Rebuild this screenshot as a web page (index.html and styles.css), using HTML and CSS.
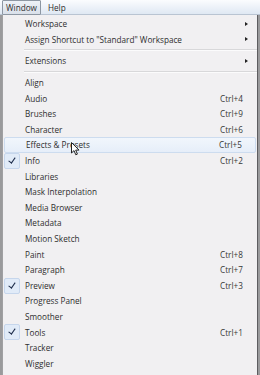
FILE: index.html
```html
<!DOCTYPE html>
<html lang="en">
<head>
    <meta charset="UTF-8">
    <title>Window Menu</title>
    <link rel="stylesheet" href="styles.css">
</head>
<body>
    <div class="menubar">
        <span class="bar-item active">Window</span>
        <span class="bar-item">Help</span>
    </div>
    <div class="menu">
        <div class="item"><span class="label">Workspace</span><span class="arrow"></span></div>
        <div class="item"><span class="label">Assign Shortcut to "Standard" Workspace</span><span class="arrow"></span></div>
        <div class="sep"></div>
        <div class="item"><span class="label">Extensions</span><span class="arrow"></span></div>
        <div class="sep"></div>
        <div class="item"><span class="label">Align</span></div>
        <div class="item"><span class="label">Audio</span><span class="key">Ctrl+4</span></div>
        <div class="item"><span class="label">Brushes</span><span class="key">Ctrl+9</span></div>
        <div class="item"><span class="label">Character</span><span class="key">Ctrl+6</span></div>
        <div class="item hover">
            <span class="label">Effects &amp; Presets</span><span class="key">Ctrl+5</span>
            <svg class="pointer" width="9" height="14" viewBox="0 0 9 14">
                <path d="M0.5 0.5 L0.5 11 L3 8.6 L4.8 12.8 L6.4 12.1 L4.7 8.1 L8 8.1 Z" fill="#fff" stroke="#222" stroke-width="1"/>
            </svg>
        </div>
        <div class="item checked"><span class="check"></span><span class="label">Info</span><span class="key">Ctrl+2</span></div>
        <div class="item"><span class="label">Libraries</span></div>
        <div class="item"><span class="label">Mask Interpolation</span></div>
        <div class="item"><span class="label">Media Browser</span></div>
        <div class="item"><span class="label">Metadata</span></div>
        <div class="item"><span class="label">Motion Sketch</span></div>
        <div class="item"><span class="label">Paint</span><span class="key">Ctrl+8</span></div>
        <div class="item"><span class="label">Paragraph</span><span class="key">Ctrl+7</span></div>
        <div class="item checked"><span class="check"></span><span class="label">Preview</span><span class="key">Ctrl+3</span></div>
        <div class="item"><span class="label">Progress Panel</span></div>
        <div class="item"><span class="label">Smoother</span></div>
        <div class="item checked"><span class="check"></span><span class="label">Tools</span><span class="key">Ctrl+1</span></div>
        <div class="item"><span class="label">Tracker</span></div>
        <div class="item"><span class="label">Wiggler</span></div>
    </div>
</body>
</html>
```

FILE: styles.css
```css
body {
    margin: 0;
    width: 260px;
    height: 375px;
    overflow: hidden;
    font-family: "Open Sans", "Noto Sans", sans-serif;
    font-size: 8.2px;
    color: #2e2e2e;
    background: #9a9a9c;
}
.menubar {
    height: 15px;
    display: flex;
    align-items: center;
    gap: 3px;
    padding-left: 2px;
    background: linear-gradient(#fbfcfe, #dfe8f3);
    border-bottom: 1px solid #b9c4d2;
    box-sizing: border-box;
}
.bar-item {
    padding: 0 3px;
    height: 13px;
    line-height: 13px;
    border: 1px solid transparent;
}
.bar-item.active {
    border-color: #8d97a3;
    background: linear-gradient(#eef2f7, #d9e0ea);
    border-radius: 1px;
}
.menu {
    position: relative;
    margin-left: 2px;
    width: 256px;
    height: 360px;
    padding-top: 1px;
    box-sizing: border-box;
    background: #f1f0f2;
    border-left: 1px solid #a0a0a2;
    border-right: 1px solid #5d5d60;
}
.item {
    position: relative;
    height: 15.6px;
    display: flex;
    align-items: center;
    padding-left: 22px;
    padding-right: 13px;
}
.label {
    flex: 1;
    white-space: nowrap;
}
.key {
    width: 24px;
    color: #383838;
}
.arrow {
    width: 0;
    height: 0;
    margin-right: -4px;
    border-top: 2.5px solid transparent;
    border-bottom: 2.5px solid transparent;
    border-left: 3px solid #222;
}
.sep {
    height: 6px;
    margin-left: 21px;
    display: flex;
    align-items: center;
}
.sep::before {
    content: "";
    flex: 1;
    height: 1px;
    background: #d8d8da;
    border-bottom: 1px solid #fbfbfc;
}
.hover {
    margin: 0 1px;
    padding-left: 21px;
    padding-right: 12px;
    box-sizing: border-box;
    border: 1px solid #cddcef;
    border-radius: 2px;
    background: linear-gradient(#f1f6fc, #e6eef9);
}
.pointer {
    position: absolute;
    left: 66px;
    top: 4px;
}
.check {
    position: absolute;
    left: 1px;
    top: 0;
    width: 14px;
    height: 14px;
    border: 1px solid #c6d6ec;
    border-radius: 2px;
    background: #e1ebf8;
}
.check::after {
    content: "";
    position: absolute;
    left: 5px;
    top: 2px;
    width: 2.5px;
    height: 6px;
    border-right: 1.5px solid #1d2c4a;
    border-bottom: 1.5px solid #1d2c4a;
    transform: rotate(35deg);
}
```
